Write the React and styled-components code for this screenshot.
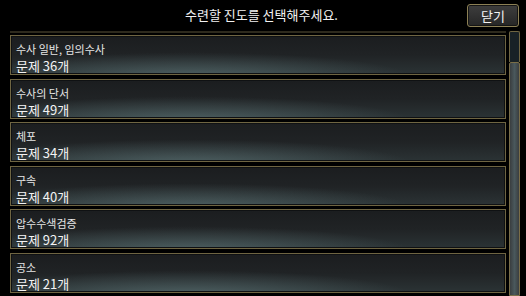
import React from 'react';
import styled, { createGlobalStyle } from 'styled-components';

const Global = createGlobalStyle`
  html, body {
    margin: 0;
    padding: 0;
    background: #000;
  }
  body {
    font-family: "Noto Sans CJK KR", "Noto Sans", sans-serif;
    color: #f0f0f0;
  }
`;

const Page = styled.div`
  width: 526px;
  height: 296px;
  overflow: hidden;
  background: #000;
  display: flex;
  flex-direction: column;
`;

const Header = styled.div`
  height: 31px;
  display: grid;
  grid-template-columns: 1fr auto 1fr;
  align-items: start;
  padding: 0 7px 0 10px;
  box-sizing: border-box;
`;

const Title = styled.div`
  grid-column: 2;
  font-size: 13px;
  line-height: 30px;
  color: #f2f2f2;
  margin-right: 6px;
`;

const CloseButton = styled.button`
  grid-column: 3;
  justify-self: end;
  margin-top: 4px;
  width: 52px;
  height: 23px;
  padding: 0;
  border: 1px solid #8c8055;
  border-radius: 3px;
  background: linear-gradient(#3e3e3e, #262626);
  box-shadow: inset 0 0 0 1px #151515;
  color: #f4f4f4;
  font-family: "Noto Sans CJK KR", sans-serif;
  font-size: 13px;
  line-height: 20px;
`;

const Body = styled.div`
  flex: 1;
  display: flex;
  gap: 3px;
  padding: 0 6px 0 10px;
  min-height: 0;
`;

const List = styled.div`
  flex: 1;
  display: flex;
  flex-direction: column;
  gap: 3.5px;
  border-top: 2px solid #2e2a1d;
  padding-top: 2px;
`;

const Item = styled.div`
  flex: none;
  height: 40px;
  box-sizing: border-box;
  border: 1px solid #6f6542;
  box-shadow: inset 0 0 0 1px #0f1113;
  background:
    radial-gradient(ellipse 45% 65% at 36% 108%, rgba(100, 126, 128, 0.6), transparent 100%),
    linear-gradient(#1b1d1f 0%, #202325 50%, #2b3335 100%);
  padding: 5px 0 0 5px;
  display: flex;
  flex-direction: column;
`;

const Name = styled.div`
  font-size: 11px;
  line-height: 16px;
  color: #e6e6e6;
`;

const Count = styled.div`
  font-size: 13px;
  line-height: 18px;
  color: #f4f4f4;
`;

const Scrollbar = styled.div`
  width: 11px;
  display: flex;
  flex-direction: column;
`;

const Track = styled.div`
  height: 31px;
  box-sizing: border-box;
  border: 1px solid #6f6542;
  border-bottom: none;
  border-radius: 2px 2px 0 0;
  background: #182126;
`;

const Thumb = styled.div`
  flex: 1;
  box-sizing: border-box;
  border: 1px solid #7a6e48;
  border-radius: 2px 2px 0 0;
  background: linear-gradient(90deg, #3a3e40, #4a585c 50%, #3a3e40);
`;

const items = [
  { name: '수사 일반, 임의수사', count: 36 },
  { name: '수사의 단서', count: 49 },
  { name: '체포', count: 34 },
  { name: '구속', count: 40 },
  { name: '압수수색검증', count: 92 },
  { name: '공소', count: 21 },
];

export default function App() {
  return (
    <Page>
      <Global />
      <Header>
        <Title>수련할 진도를 선택해주세요.</Title>
        <CloseButton>닫기</CloseButton>
      </Header>
      <Body>
        <List>
          {items.map((item) => (
            <Item key={item.name}>
              <Name>{item.name}</Name>
              <Count>문제 {item.count}개</Count>
            </Item>
          ))}
        </List>
        <Scrollbar>
          <Track />
          <Thumb />
        </Scrollbar>
      </Body>
    </Page>
  );
}
